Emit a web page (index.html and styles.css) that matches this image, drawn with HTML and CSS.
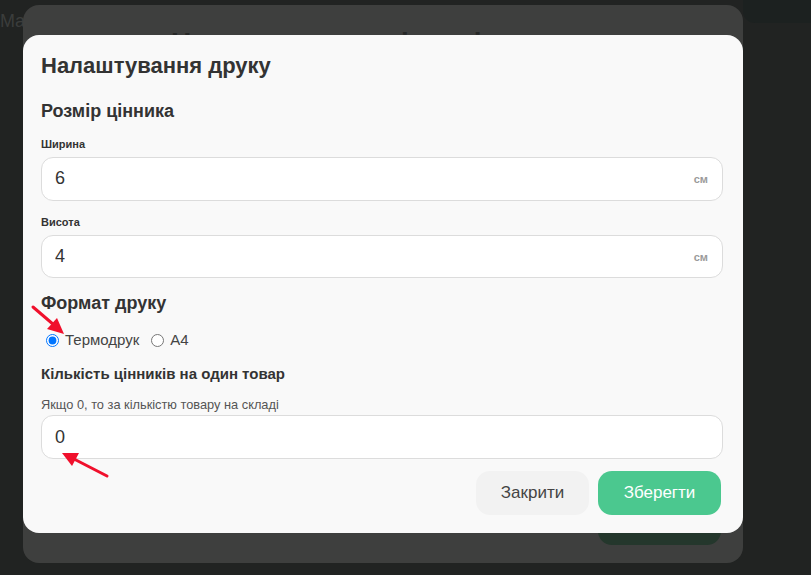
FILE: index.html
```html
<!DOCTYPE html>
<html lang="uk">
<head>
    <meta charset="UTF-8">
    <meta name="viewport" content="width=device-width, initial-scale=1.0">
    <title>Налаштування друку</title>
    <link rel="stylesheet" href="styles.css">
</head>
<body>
    <div class="page">
        <div class="page-top">
            <span class="page-brand">Ma</span>
            <div class="page-corner"></div>
        </div>
    </div>

    <!-- dimmed modal underneath -->
    <div class="back-modal">
        <h1 class="back-title">Налаштування цінників</h1>
        <div class="back-actions">
            <button class="back-btn">Зберегти</button>
        </div>
    </div>

    <!-- print settings dialog -->
    <div class="dialog">
        <h2 class="dialog-title">Налаштування друку</h2>

        <h3 class="section-title">Розмір цінника</h3>
        <label class="field-label">Ширина</label>
        <div class="input-box">
            <input type="text" value="6">
            <span class="unit">см</span>
        </div>
        <label class="field-label">Висота</label>
        <div class="input-box">
            <input type="text" value="4">
            <span class="unit">см</span>
        </div>

        <h3 class="section-title format-title">Формат друку</h3>
        <div class="radio-row">
            <label><input type="radio" name="format" checked>Термодрук</label>
            <label><input type="radio" name="format">A4</label>
        </div>

        <h4 class="count-title">Кількість цінників на один товар</h4>
        <p class="hint">Якщо 0, то за кількістю товару на складі</p>
        <div class="input-box">
            <input type="text" value="0">
        </div>

        <div class="actions">
            <button class="btn btn-close">Закрити</button>
            <button class="btn btn-save">Зберегти</button>
        </div>
    </div>

    <!-- annotation arrows -->
    <svg class="arrows" width="811" height="575" viewBox="0 0 811 575">
        <g stroke="#f0102c" stroke-width="3" stroke-linecap="round" fill="#f0102c">
            <line x1="33" y1="307" x2="54" y2="325"></line>
            <polygon points="64,334 47,329 57,318" stroke="none"></polygon>
            <line x1="107" y1="476" x2="74" y2="459"></line>
            <polygon points="62,453 79,453 72,466" stroke="none"></polygon>
        </g>
    </svg>
</body>
</html>
```

FILE: styles.css
```css
body {
    margin: 0;
    width: 811px;
    height: 575px;
    overflow: hidden;
    background-color: #212322;
    font-family: "Liberation Sans", Arial, sans-serif;
    color: #333;
    position: relative;
}

.page-top {
    display: flex;
    justify-content: space-between;
    height: 23px;
}

.page-brand {
    font-size: 18px;
    color: #3b3d3c;
    padding-top: 11px;
    line-height: 20px;
}

.page-corner {
    width: 68px;
    height: 23px;
    background-color: #1c2120;
    border-bottom-left-radius: 12px;
}

.back-modal {
    position: absolute;
    left: 23px;
    top: 5px;
    width: 720px;
    height: 558px;
    background-color: #3e3f3e;
    border-radius: 16px;
    box-sizing: border-box;
    padding: 22px 0 0 148px;
}

.back-title {
    margin: 0;
    font-size: 28px;
    line-height: 32px;
    color: #262827;
}

.back-actions {
    display: flex;
    justify-content: flex-end;
    padding-right: 22px;
    margin-top: 442px;
}

.back-btn {
    width: 123px;
    height: 44px;
    border: none;
    border-radius: 14px;
    background-color: #24372c;
    color: #24372c;
}

.dialog {
    position: absolute;
    left: 23px;
    top: 35px;
    width: 720px;
    height: 498px;
    box-sizing: border-box;
    padding: 18px 20px 18px 18px;
    background-color: #f9f9f9;
    border-radius: 16px;
    display: flex;
    flex-direction: column;
}

.dialog-title {
    margin: 0 0 23px;
    font-size: 22px;
    line-height: 25px;
    font-weight: bold;
    color: #333;
}

.section-title {
    margin: 0 0 16px;
    font-size: 18px;
    line-height: 21px;
    font-weight: bold;
    color: #333;
}

.format-title {
    margin: 15px 0 17px;
}

.field-label {
    display: block;
    font-size: 11px;
    line-height: 13px;
    font-weight: bold;
    color: #333;
    margin-bottom: 6px;
}

.input-box + .field-label {
    margin-top: 15px;
}

.input-box {
    display: flex;
    align-items: center;
    height: 45px;
    box-sizing: border-box;
    border: 1px solid #dcdcdc;
    border-radius: 12px;
    background-color: #fff;
    padding: 0 14px 0 13px;
}

.input-box input {
    flex: 1;
    border: none;
    outline: none;
    background: none;
    font-family: inherit;
    font-size: 18px;
    color: #333;
    padding: 0;
}

.unit {
    font-size: 11px;
    font-weight: bold;
    color: #9a9a9a;
}

.radio-row {
    display: flex;
    gap: 7px;
    font-size: 15px;
    color: #444;
    line-height: 18px;
}

.radio-row label {
    display: flex;
    align-items: center;
}

.radio-row input {
    margin: 0 6px 0 5px;
    width: 13px;
    height: 13px;
}

.count-title {
    margin: 16px 0 15px;
    font-size: 15px;
    line-height: 17px;
    font-weight: bold;
    color: #333;
}

.hint {
    margin: 0 0 3px;
    font-size: 12.8px;
    line-height: 15px;
    color: #555;
}

.actions {
    display: flex;
    justify-content: flex-end;
    gap: 9px;
    margin-top: 12px;
    padding-right: 2px;
}

.btn {
    height: 44px;
    border: none;
    border-radius: 14px;
    font-family: inherit;
    font-size: 17px;
    cursor: pointer;
}

.btn-close {
    width: 113px;
    background-color: #f2f2f2;
    color: #444;
}

.btn-save {
    width: 123px;
    background-color: #4bc88f;
    color: #fff;
}

.arrows {
    position: absolute;
    left: 0;
    top: 0;
    pointer-events: none;
}
```
